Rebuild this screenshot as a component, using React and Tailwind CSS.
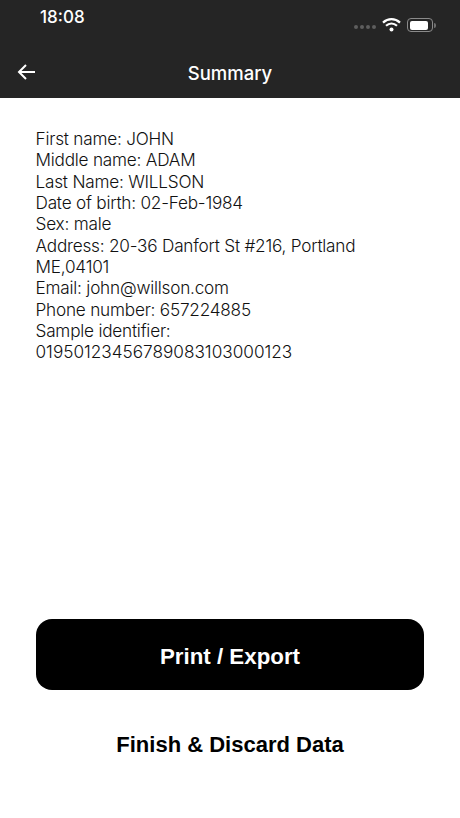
const lines = [
  "First name: JOHN",
  "Middle name: ADAM",
  "Last Name: WILLSON",
  "Date of birth: 02-Feb-1984",
  "Sex: male",
  "Address: 20-36 Danfort St #216, Portland",
  "ME,04101",
  "Email: john@willson.com",
  "Phone number: 657224885",
  "Sample identifier:",
];

function StatusIcons() {
  return (
    <div className="flex items-center">
      <div className="flex gap-[2px] mr-[6px] mt-[3px]">
        <span className="w-[4px] h-[4px] rounded-full bg-[#5e5e5e]" />
        <span className="w-[4px] h-[4px] rounded-full bg-[#5e5e5e]" />
        <span className="w-[4px] h-[4px] rounded-full bg-[#5e5e5e]" />
        <span className="w-[4px] h-[4px] rounded-full bg-[#5e5e5e]" />
      </div>
      <svg width="19" height="14" viewBox="0 0 19 14" fill="none" stroke="white" strokeWidth="2.2">
        <path d="M1 4.6C6 0 13 0 18 4.6" />
        <path d="M4 7.8C7.3 4.8 11.7 4.8 15 7.8" />
        <circle cx="9.5" cy="11.5" r="2" fill="white" stroke="none" />
      </svg>
      <div className="ml-[6px] w-[26px] h-[14px] rounded-[4px] border border-[#8a8a8a] p-[1.5px]">
        <div className="w-[18px] h-full rounded-[2px] bg-white" />
      </div>
      <div className="ml-[1px] w-[2px] h-[5px] rounded-r-sm bg-[#6e6e6e]" />
    </div>
  );
}

export default function App() {
  return (
    <div className="w-[460px] h-[818px] flex flex-col bg-white font-['Inter','Liberation_Sans',sans-serif]">
      {/* Header */}
      <div className="h-[98px] shrink-0 bg-[#252525] text-white">
        <div className="h-[50px] pl-[40px] pr-[24px] flex items-start justify-between">
          <span className="mt-[7px] text-[17px] leading-[21px] font-medium">18:08</span>
          <div className="mt-[18px]">
            <StatusIcons />
          </div>
        </div>
        <div className="relative h-[48px] flex items-center justify-center">
          <svg className="absolute left-[17px] top-[13px]" width="19" height="18" viewBox="0 0 19 18" fill="none" stroke="white" strokeWidth="2">
            <path d="M18 9H2" />
            <path d="M9 2L2 9L9 16" />
          </svg>
          <span className="mb-[3px] text-[18.5px] leading-[22px] font-medium">Summary</span>
        </div>
      </div>

      {/* Details */}
      <div className="flex-1 pl-[35.5px] pr-[36px] pt-[30px] text-[17.2px] leading-[21.35px] tracking-[-0.22px] font-light text-[#111111]">
        {lines.map((line) => (
          <div key={line}>{line}</div>
        ))}
        <div className="tracking-normal">01950123456789083103000123</div>
      </div>

      {/* Actions */}
      <div className="px-[36px] pb-[60px] flex flex-col items-center">
        <button className="w-full h-[71px] pt-[4px] rounded-[16px] bg-black text-white text-[22.3px] font-bold font-['Liberation_Sans',sans-serif]">
          Print / Export
        </button>
        <button className="mt-[41px] text-[22px] leading-[27px] font-bold text-black font-['Liberation_Sans',sans-serif]">
          Finish &amp; Discard Data
        </button>
      </div>
    </div>
  );
}
